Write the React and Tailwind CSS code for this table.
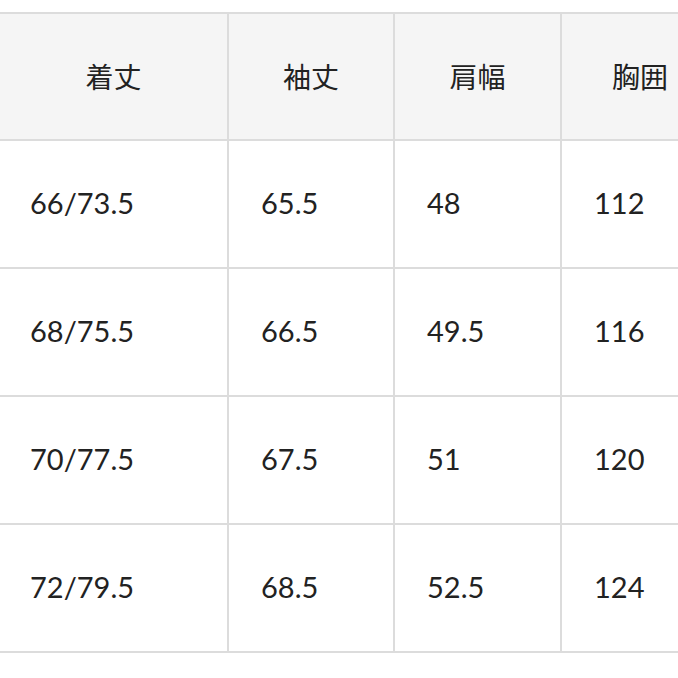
import React from "react";

const headers = ["着丈", "袖丈", "肩幅", "胸囲"];
const rows = [
  ["66/73.5", "65.5", "48", "112"],
  ["68/75.5", "66.5", "49.5", "116"],
  ["70/77.5", "67.5", "51", "120"],
  ["72/79.5", "68.5", "52.5", "124"],
];

const colWidths = ["w-[229px]", "w-[166px]", "w-[167px]", "w-[156px]"];

export default function App() {
  return (
    <div
      className="w-[678px] h-[678px] overflow-hidden bg-white pt-[12px] text-[#222222]"
      style={{ fontFamily: '"Lato", "Noto Sans CJK JP", sans-serif' }}
    >
      <div className="w-[718px] border-t-2 border-[#dcdcdc]">
        {/* header */}
        <div className="flex bg-[#f5f5f5] border-b-2 border-[#dcdcdc]">
          {headers.map((h, i) => (
            <div
              key={h}
              className={`${colWidths[i]} shrink-0 h-[125px] flex items-center justify-center text-[28px] ${
                i < 3 ? "border-r-2 border-[#dcdcdc]" : ""
              }`}
            >
              {h}
            </div>
          ))}
        </div>
        {rows.map((r, ri) => (
          <div key={ri} className="flex border-b-2 border-[#dcdcdc]">
            {r.map((c, i) => (
              <div
                key={i}
                className={`${colWidths[i]} shrink-0 h-[126px] flex items-center pb-[2px] text-[29px] ${
                  i === 0 ? "pl-[30px]" : "pl-[32px]"
                } ${i < 3 ? "border-r-2 border-[#dcdcdc]" : ""}`}
              >
                {c}
              </div>
            ))}
          </div>
        ))}
      </div>
    </div>
  );
}
